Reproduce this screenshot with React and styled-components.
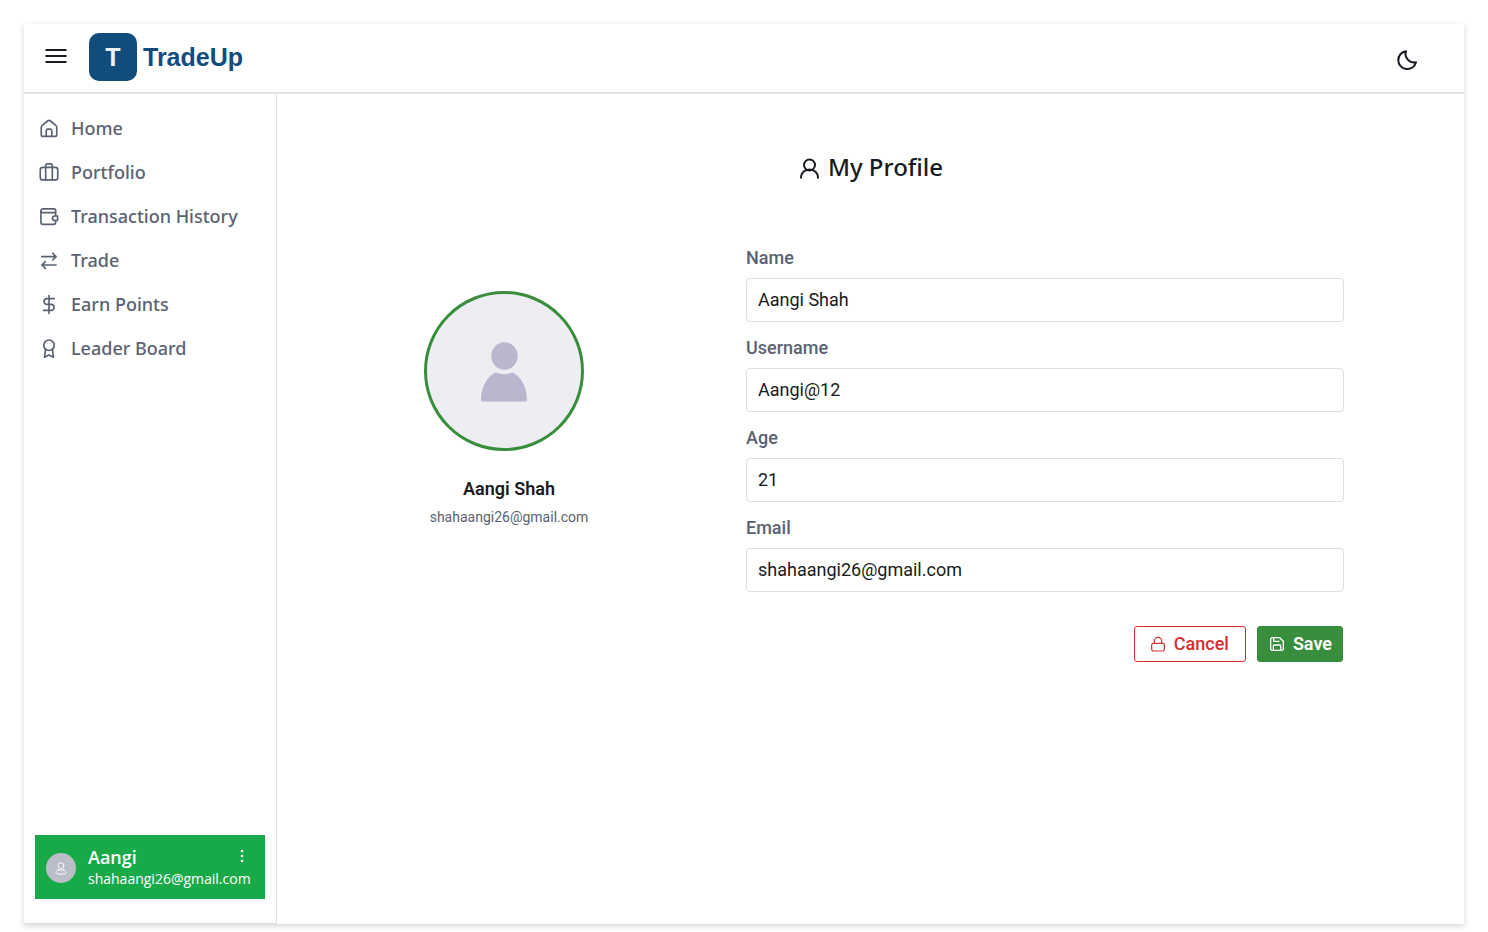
import React, { useState } from "react";
import styled, { createGlobalStyle, css } from "styled-components";

const color = {
  ink: "#171b21",
  muted: "#5a6272",
  line: "#dedee5",
  brand: "#114c7c",
  green: "#388e3c",
  badge: "#18aa48",
  red: "#d42f2f",
};

const GlobalStyle = createGlobalStyle`
  *, *::before, *::after { box-sizing: border-box; }
  body {
    margin: 0;
    background: #fff;
    color: ${color.ink};
    font-family: "Noto Sans", sans-serif;
  }
  button, input { font: inherit; }
`;

const Page = styled.div`
  padding: 24px 24px 8px;
`;

const Shell = styled.div`
  display: flex;
  flex-direction: column;
  min-height: calc(100vh - 32px);
  background: #fff;
  box-shadow: 0 2px 6px rgba(0, 0, 0, 0.16);
`;

const TopBar = styled.header`
  display: flex;
  align-items: center;
  height: 70px;
  padding: 0 44px 2px 20px;
  border-bottom: 2px solid #e2e2e9;
`;

const IconButton = styled.button`
  display: flex;
  align-items: center;
  justify-content: center;
  padding: 0;
  border: 0;
  background: none;
  color: inherit;
  cursor: pointer;
`;

const MenuButton = styled(IconButton)`
  width: 24px;
  height: 26px;
  padding-bottom: 2px;
`;

const ThemeButton = styled(IconButton)`
  width: 26px;
  height: 40px;
  margin-left: auto;
  padding-top: 6px;
`;

const Brand = styled.a`
  display: flex;
  align-items: center;
  gap: 6px;
  margin-left: 21px;
  color: ${color.brand};
  font: 700 25px/32px "Liberation Sans", Arial, sans-serif;
  text-decoration: none;
`;

const BrandMark = styled.span`
  display: flex;
  align-items: center;
  justify-content: center;
  width: 48px;
  height: 48px;
  border-radius: 10px;
  background: ${color.brand};
  color: #eef2fb;
`;

const Body = styled.div`
  display: flex;
  flex: 1;
`;

const Sidebar = styled.aside`
  display: flex;
  flex-direction: column;
  justify-content: space-between;
  width: 253px;
  padding: 12px 11px 24px;
  border-right: 1px solid ${color.line};
  border-bottom: 1px solid ${color.line};
`;

const NavList = styled.ul`
  margin: 0;
  padding: 0;
  list-style: none;
`;

const NavLink = styled.a`
  display: flex;
  align-items: center;
  gap: 12px;
  height: 44px;
  padding-left: 4px;
  color: ${color.muted};
  font-size: 18px;
  font-weight: 500;
  line-height: 24px;
  text-decoration: none;
  white-space: nowrap;
`;

const UserCard = styled.div`
  display: flex;
  align-items: center;
  gap: 12px;
  height: 64px;
  padding: 1px 0 0 11px;
  background: ${color.badge};
  color: #fff;
`;

const UserAvatar = styled.span`
  display: flex;
  align-items: center;
  justify-content: center;
  flex: none;
  width: 30px;
  height: 30px;
  border-radius: 50%;
  background: #b9bec9;
`;

const UserInfo = styled.div`
  flex: 1;
  font-family: "Open Sans", "Noto Sans", sans-serif;
`;

const UserHead = styled.div`
  display: flex;
  align-items: center;
  justify-content: space-between;
  padding-right: 16px;
  font-size: 18px;
  font-weight: 600;
  line-height: 22px;
`;

const UserMail = styled.div`
  font-size: 14px;
  line-height: 22px;
`;

const Main = styled.main`
  flex: 1;
  padding: 56px 120px 40px;
`;

const Title = styled.h1`
  display: flex;
  align-items: center;
  justify-content: center;
  gap: 6px;
  margin: 0 0 62px;
  font-size: 24px;
  font-weight: 500;
  line-height: 34px;
`;

const Profile = styled.div`
  display: grid;
  grid-template-columns: 224px 1fr;
  column-gap: 125px;
  font-family: Roboto, sans-serif;
`;

const Identity = styled.section`
  width: 170px;
  margin: 45px auto 0;
  text-align: center;
`;

const Portrait = styled.div`
  display: flex;
  align-items: center;
  justify-content: center;
  width: 160px;
  height: 160px;
  margin-bottom: 24px;
  border: 3px solid ${color.green};
  border-radius: 50%;
  background: #eeedf2;
`;

const FullName = styled.h2`
  margin: 0 0 4px;
  font-size: 18px;
  font-weight: 600;
  line-height: 28px;
`;

const Mail = styled.p`
  margin: 0;
  color: ${color.muted};
  font-size: 14px;
  line-height: 20px;
`;

const Form = styled.form`
  display: flex;
  flex-direction: column;
  gap: 14px;
  min-width: 0;
`;

const Field = styled.div`
  display: flex;
  flex-direction: column;
  gap: 8px;
`;

const Label = styled.label`
  color: ${color.muted};
  font-size: 18px;
  font-weight: 500;
  line-height: 24px;
`;

const TextInput = styled.input`
  width: 100%;
  height: 44px;
  padding: 0 11px 2px;
  border: 1px solid ${color.line};
  border-radius: 4px;
  background: #fff;
  color: ${color.ink};
  font-size: 18px;
`;

const Actions = styled.div`
  display: flex;
  justify-content: flex-end;
  gap: 11px;
  margin-top: 20px;
  padding-right: 1px;
`;

const Button = styled.button`
  display: flex;
  align-items: center;
  gap: 8px;
  height: 36px;
  border: 1px solid ${color.red};
  border-radius: 3px;
  background: #fff;
  color: ${color.red};
  padding: 0 16px 0 15px;
  font-size: 18px;
  font-weight: 500;
  line-height: 24px;
  cursor: pointer;
  ${(p) =>
    p.$solid &&
    css`
      padding: 0 10px 0 11px;
      border-color: ${color.green};
      background: ${color.green};
      color: #fff;
      font-weight: 600;
    `}
`;

const Icon = ({ size = 20, stroke = 1.5, children }) => (
  <svg
    width={size}
    height={size}
    viewBox="0 0 24 24"
    fill="none"
    stroke="currentColor"
    strokeWidth={stroke}
    strokeLinecap="round"
    strokeLinejoin="round"
    aria-hidden="true"
  >
    {children}
  </svg>
);

const navItems = [
  {
    label: "Home",
    icon: (
      <>
        <path d="M2.7 11.4c0-1 .4-1.9 1.2-2.5l6.4-5.3a2.6 2.6 0 0 1 3.4 0l6.4 5.3c.8.6 1.2 1.5 1.2 2.5v8.3a2.4 2.4 0 0 1-2.4 2.4H5.1a2.4 2.4 0 0 1-2.4-2.4z" />
        <path d="M8.7 22v-6.8a1.8 1.8 0 0 1 1.8-1.8h3a1.8 1.8 0 0 1 1.8 1.8V22" />
      </>
    ),
  },
  {
    label: "Portfolio",
    icon: (
      <>
        <rect x="1.5" y="6.5" width="21" height="15" rx="3" />
        <path d="M8 21.5V4.8A2.5 2.5 0 0 1 10.5 2.3h3A2.5 2.5 0 0 1 16 4.8v16.7" />
      </>
    ),
  },
  {
    label: "Transaction History",
    icon: (
      <>
        <path d="M20 11.5V8H4.500A2.200 2.200 0 0 1 2.300 5.800v0A2.300 2.300 0 0 1 4.600 3.500H18a2 2 0 0 1 2 2V8" />
        <path d="M2.300 5.800V19.500a2.500 2.500 0 0 0 2.500 2.500h12.700A2.500 2.500 0 0 0 20 19.500v-2" />
        <path d="M22.300 12h-3.500a2.700 2.700 0 0 0 0 5.400h3.500z" />
      </>
    ),
  },
  {
    label: "Trade",
    icon: (
      <>
        <path d="M3.5 8h17M16.5 4l4 4-4 4" />
        <path d="M20.5 18h-17M7.5 14l-4 4 4 4" />
      </>
    ),
  },
  {
    label: "Earn Points",
    icon: (
      <>
        <path d="M12 2v21" />
        <path d="M18.3 5.5H9.6a3.5 3.5 0 0 0 0 7h4.9a3.6 3.6 0 0 1 0 7.200H5.300" />
      </>
    ),
  },
  {
    label: "Leader Board",
    icon: (
      <>
        <circle cx="12" cy="8.7" r="6.3" />
        <path d="M7.8 13.700L6.700 23l5.300-2.700 5.300 2.700-1.100-9.300" />
      </>
    ),
  },
];

const fields = [
  { id: "name", label: "Name", type: "text" },
  { id: "username", label: "Username", type: "text" },
  { id: "age", label: "Age", type: "text" },
  { id: "email", label: "Email", type: "email" },
];

const user = {
  name: "Aangi Shah",
  username: "Aangi@12",
  age: "21",
  email: "shahaangi26@gmail.com",
};

export default function App() {
  const [values, setValues] = useState(user);
  const update = (e) => setValues({ ...values, [e.target.id]: e.target.value });

  return (
    <Page>
      <GlobalStyle />
      <Shell>
        <TopBar>
          <MenuButton type="button" aria-label="Toggle menu">
            <svg width="24" height="24" viewBox="0 0 24 24" fill="none" stroke="currentColor" strokeWidth="2">
              <path d="M1.5 6h21M1.5 12h21M1.5 18h21" />
            </svg>
          </MenuButton>
          <Brand href="#home">
            <BrandMark>T</BrandMark>
            TradeUp
          </Brand>
          <ThemeButton type="button" aria-label="Dark mode">
            <Icon size={24} stroke={2}>
              <path d="M11 3.2A9 9 0 1 0 21 14.3 8.7 8.7 0 0 1 11 3.2z" />
            </Icon>
          </ThemeButton>
        </TopBar>
        <Body>
          <Sidebar>
            <nav>
              <NavList>
                {navItems.map((item) => (
                  <li key={item.label}>
                    <NavLink href={"#" + item.label.toLowerCase().replace(" ", "-")}>
                      <Icon stroke={2}>{item.icon}</Icon>
                      {item.label}
                    </NavLink>
                  </li>
                ))}
              </NavList>
            </nav>
            <UserCard>
              <UserAvatar>
                <Icon size={14} stroke={1.5}>
                  <circle cx="12" cy="8" r="5" />
                  <path d="M8 15c-2.500.8-4.500 2.300-4.500 4.300 0 2 1.500 3 3.500 3h10c2 0 3.500-1 3.500-3 0-2-2-3.500-4.500-4.300M7 15.500h10" />
                </Icon>
              </UserAvatar>
              <UserInfo>
                <UserHead>
                  Aangi
                  <IconButton type="button" aria-label="Account options">
                    <svg width="14" height="16" viewBox="0 0 14 16" fill="currentColor">
                      <circle cx="7" cy="2" r="1.3" />
                      <circle cx="7" cy="7" r="1.3" />
                      <circle cx="7" cy="12" r="1.3" />
                    </svg>
                  </IconButton>
                </UserHead>
                <UserMail>{user.email}</UserMail>
              </UserInfo>
            </UserCard>
          </Sidebar>
          <Main>
            <Title>
              <Icon size={24} stroke={2}>
                <circle cx="11.5" cy="10" r="5.5" />
                <path d="M3 23.5v-1a8.5 8 0 0 1 17 0v1" strokeLinecap="butt" />
              </Icon>
              My Profile
            </Title>
            <Profile>
              <Identity>
                <Portrait>
                  <svg width="48" height="62" viewBox="0 0 48 62" fill="#b9b6cd" aria-hidden="true">
                    <ellipse cx="24.5" cy="16" rx="13.2" ry="13.7" />
                    <path d="M16 32.5q8 3.5 16 0c8 2.5 15 14 15 27.5q0 1.500-2 1.500H3q-2 0-2-1.500c0-13.500 7-25 15-27.500z" />
                  </svg>
                </Portrait>
                <FullName>{user.name}</FullName>
                <Mail>{user.email}</Mail>
              </Identity>
              <Form onSubmit={(e) => e.preventDefault()}>
                {fields.map((f) => (
                  <Field key={f.id}>
                    <Label htmlFor={f.id}>{f.label}</Label>
                    <TextInput id={f.id} type={f.type} value={values[f.id]} onChange={update} />
                  </Field>
                ))}
                <Actions>
                  <Button type="button" onClick={() => setValues(user)}>
                    <Icon size={16} stroke={1.8}>
                      <rect x="2.5" y="11" width="19" height="11.5" rx="2.5" />
                      <path d="M6.5 11V7.5a5.500 5.500 0 0 1 11 0V11" />
                    </Icon>
                    Cancel
                  </Button>
                  <Button type="submit" $solid>
                    <Icon size={16} stroke={2}>
                      <path d="M2.5 5A2.5 2.5 0 0 1 5 2.5h11L21.5 8v11a2.5 2.5 0 0 1-2.5 2.5H5A2.5 2.5 0 0 1 2.5 19z" />
                      <path d="M7 2.5V8h8M6.5 21.5V15A1.5 1.5 0 0 1 8 13.5h8a1.5 1.5 0 0 1 1.5 1.5v6.500" />
                    </Icon>
                    Save
                  </Button>
                </Actions>
              </Form>
            </Profile>
          </Main>
        </Body>
      </Shell>
    </Page>
  );
}
